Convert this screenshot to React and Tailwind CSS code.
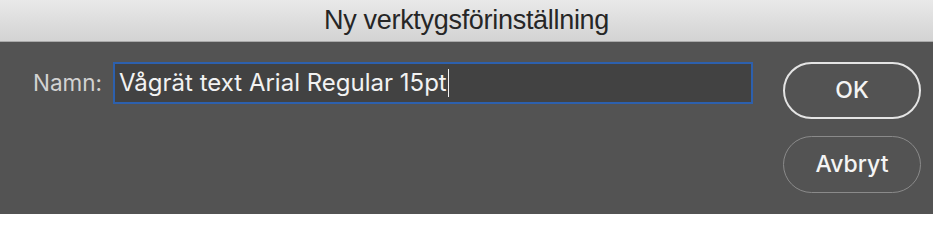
const App = () => {
  return (
    <div className="w-[933px] h-[214px] flex flex-col bg-[#535353] overflow-hidden font-['Inter','Liberation_Sans',sans-serif]">
      <div className="h-[42px] shrink-0 flex items-center justify-center bg-gradient-to-b from-[#e9e9e9] to-[#d3d3d3] border-b border-[#a9a9a9]">
        <span className="text-[27px] text-[#262626] font-['Liberation_Sans',sans-serif] tracking-[-0.3px]">
          Ny verktygsförinställning
        </span>
      </div>
      <div className="flex pl-[33px] pt-[20px]">
        <div className="w-[71px] h-[42px] flex items-center">
          <label className="text-[22.5px] text-[#d2d2d2] whitespace-nowrap">Namn:</label>
        </div>
        <div className="ml-[9px] w-[640px] h-[42px] border-2 border-[#2d60ad] bg-[#424242] flex items-center pl-[4px]">
          <span className="text-[24px] text-[#f2f2f2] whitespace-nowrap">Vågrät text Arial Regular 15pt</span>
          <span className="w-[1.5px] h-[28px] bg-[#f2f2f2] ml-[1px]"></span>
        </div>
        <div className="ml-[30px] flex flex-col gap-[17px]">
          <button className="w-[138px] h-[57px] rounded-full border-2 border-[#e4e4e4] text-[23px] font-medium text-[#f4f4f4]">
            OK
          </button>
          <button className="w-[138px] h-[57px] rounded-full border-[1.5px] border-[#8a8a8a] text-[23px] font-medium text-[#f4f4f4]">
            Avbryt
          </button>
        </div>
      </div>
    </div>
  );
};
export default App;
